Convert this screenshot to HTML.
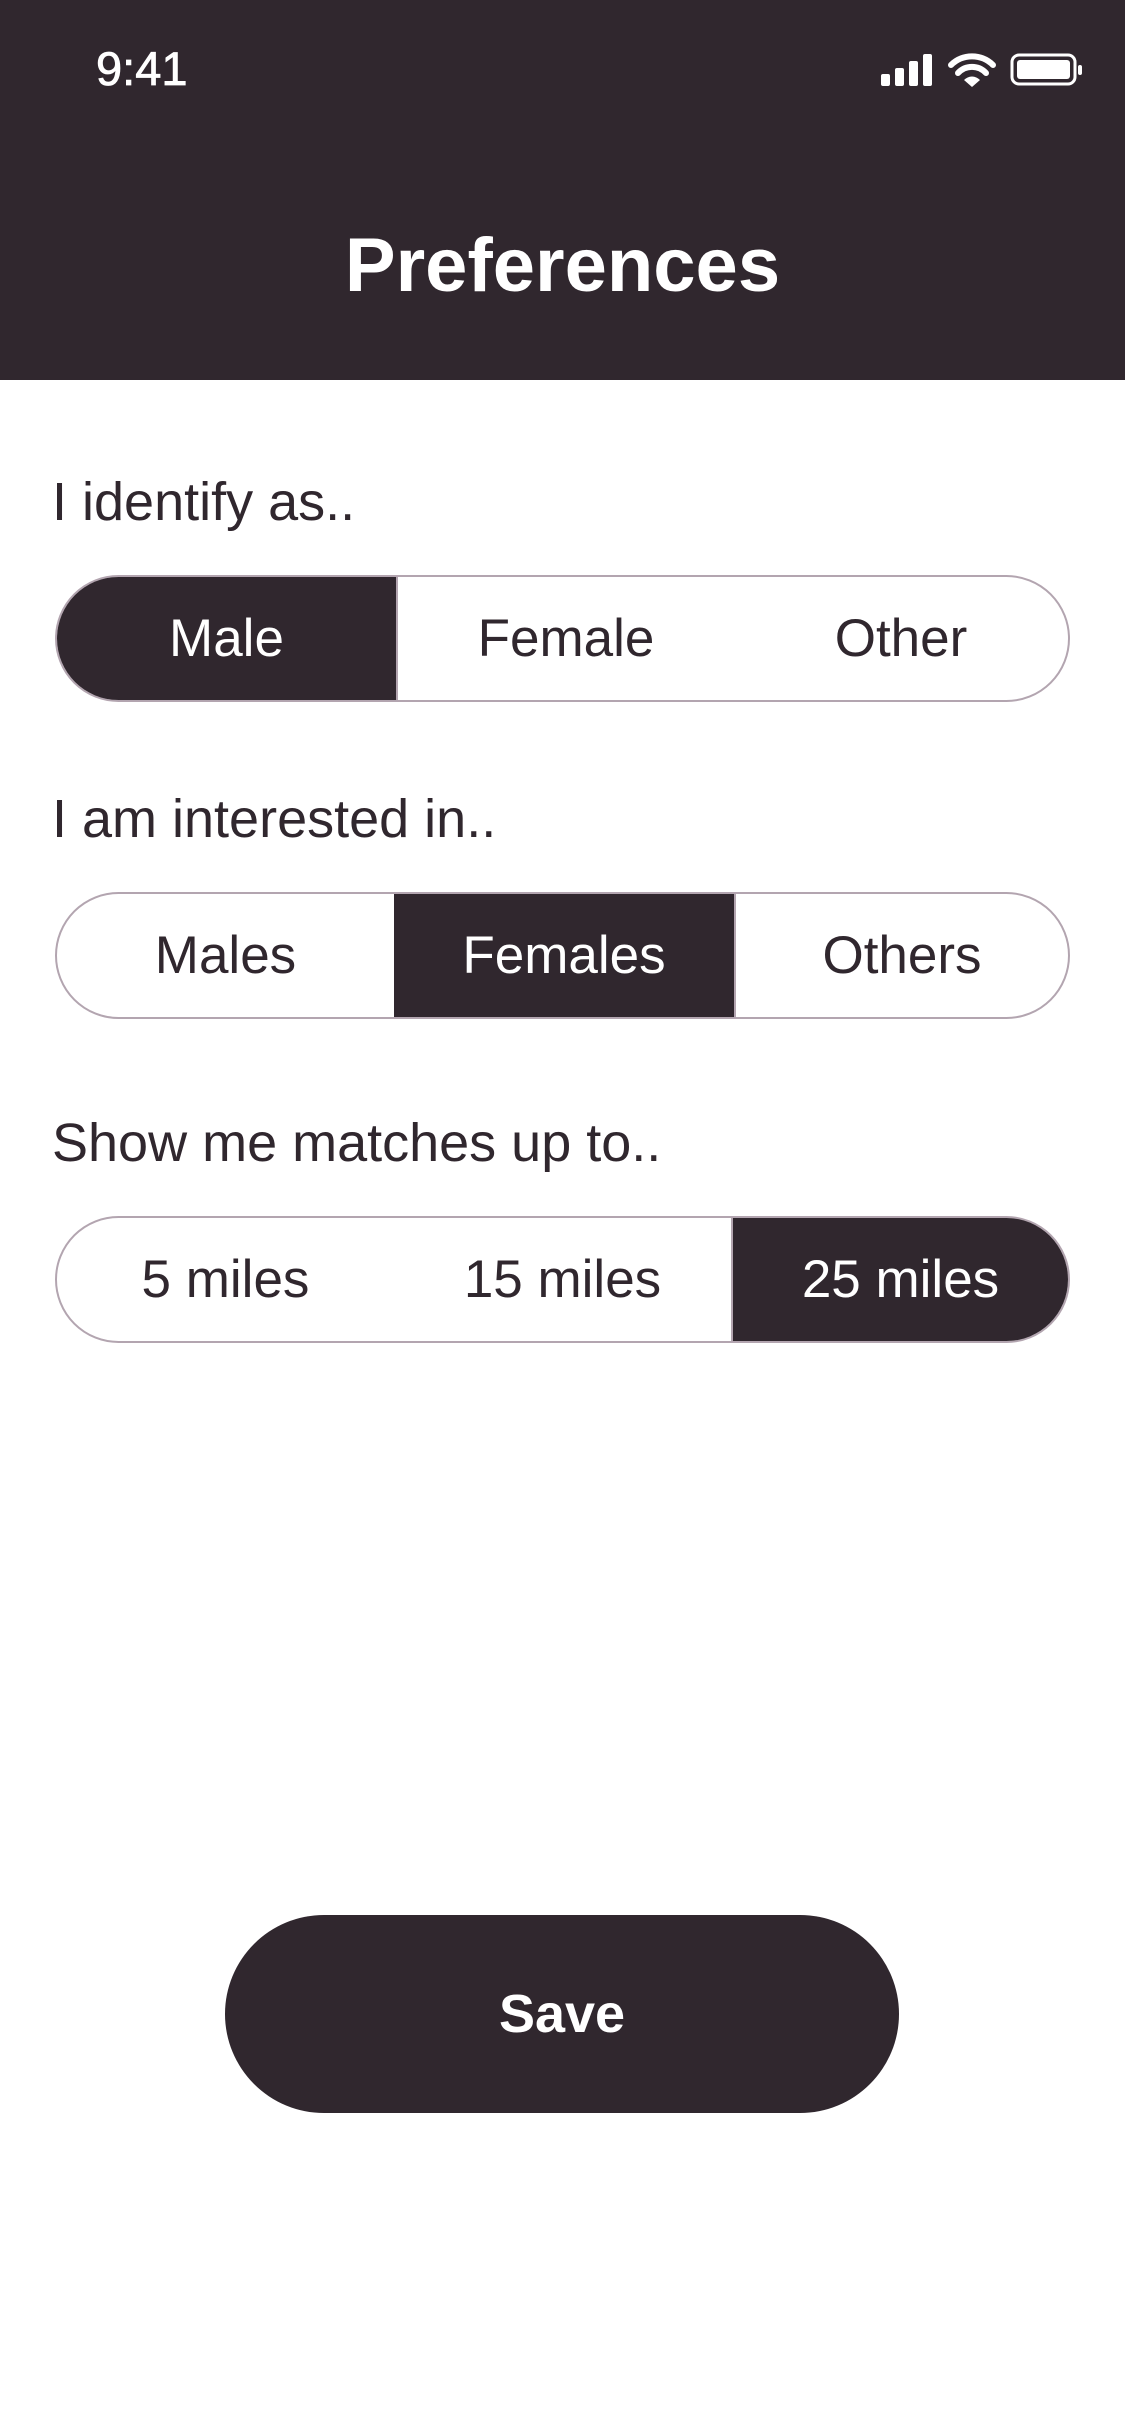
<!DOCTYPE html>
<html><head><meta charset="utf-8"><style>
*{margin:0;padding:0;box-sizing:border-box}
body{width:1125px;height:2436px;background:#fff;position:relative;overflow:hidden;font-family:"Liberation Sans",Arial,sans-serif;color:#30272e}
.hdr{position:absolute;left:0;top:0;width:1125px;height:380px;background:#30272e}
.time{position:absolute;left:96px;top:43px;font-size:47px;color:#fff;line-height:52px;-webkit-text-stroke:0.8px #fff}
.title{position:absolute;left:0;width:1125px;top:222px;text-align:center;font-size:76px;font-weight:bold;color:#fff;line-height:88px}
.lbl{position:absolute;left:52px;font-size:54px;line-height:60px}
.seg{position:absolute;left:55px;width:1015px;height:127px;border:2px solid #b3a5b0;border-radius:64px;overflow:hidden;display:flex}
.seg div{flex:0 0 auto;display:flex;align-items:center;justify-content:center;font-size:53px}
.seg .on{background:#30272e;color:#fff}
.save{position:absolute;left:225px;top:1915px;width:674px;height:198px;border-radius:99px;background:#30272e;color:#fff;font-weight:bold;font-size:54px;display:flex;align-items:center;justify-content:center}
</style></head><body>
<div class="hdr">
<div class="time">9:41</div>
<svg style="position:absolute;left:878px;top:52px" width="206" height="36" viewBox="0 0 206 36">
<rect x="3" y="22" width="9" height="12" rx="2" fill="#fff"/>
<rect x="17" y="16" width="9" height="18" rx="2" fill="#fff"/>
<rect x="31" y="9" width="9" height="25" rx="2" fill="#fff"/>
<rect x="45" y="2" width="9" height="32" rx="2" fill="#fff"/>
<path d="M73 13 A30 30 0 0 1 115 13" stroke="#fff" stroke-width="6" fill="none" stroke-linecap="round"/>
<path d="M80 21 A19 19 0 0 1 108 21" stroke="#fff" stroke-width="6" fill="none" stroke-linecap="round"/>
<path d="M86 28 L94 35 L102 28 A11 11 0 0 0 86 28Z" fill="#fff"/>
<rect x="134" y="3" width="63" height="29" rx="7" stroke="#fff" stroke-width="3" fill="none"/>
<rect x="139" y="8" width="53" height="19" rx="3" fill="#fff"/>
<rect x="200" y="13" width="4" height="10" rx="2" fill="#fff"/>
</svg>
<div class="title">Preferences</div>
</div>
<div class="lbl" style="top:472px">I identify as..</div>
<div class="seg" style="top:575px"><div class="on" style="width:339px">Male</div><div style="width:338px;border-left:2px solid #b3a5b0">Female</div><div style="width:334px">Other</div></div>
<div class="lbl" style="top:789px">I am interested in..</div>
<div class="seg" style="top:892px"><div style="width:337px">Males</div><div class="on" style="width:340px">Females</div><div style="width:334px;border-left:2px solid #b3a5b0">Others</div></div>
<div class="lbl" style="top:1113px">Show me matches up to..</div>
<div class="seg" style="top:1216px"><div style="width:337px">5 miles</div><div style="width:337px">15 miles</div><div class="on" style="width:337px;border-left:2px solid #b3a5b0">25 miles</div></div>
<div class="save">Save</div>
</body></html>
